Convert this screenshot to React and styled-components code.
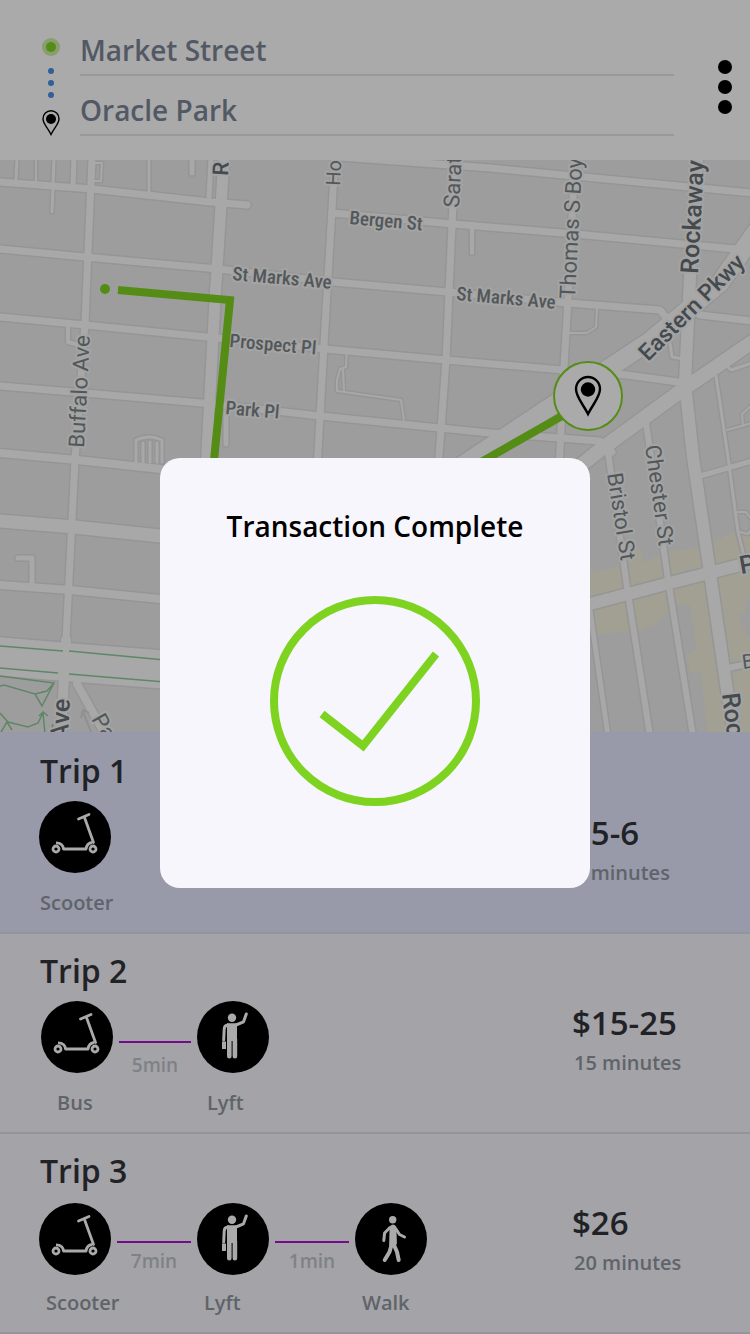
import React from 'react';
import styled, { createGlobalStyle } from 'styled-components';

const GlobalStyle = createGlobalStyle`
  * { box-sizing: border-box; }
  body {
    margin: 0;
    background: #fff;
    font-family: "Open Sans", "Noto Sans", sans-serif;
    font-weight: 600;
  }
`;

const Page = styled.div`
  display: flex;
  flex-direction: column;
  min-height: 100vh;
`;

/* ---------- search header ---------- */

const Header = styled.header`
  display: flex;
  align-items: flex-start;
  padding: 16px 18px 24px 42px;
  background: #fff;
`;

const Trail = styled.svg`
  flex: none;
  width: 18px;
  height: 98px;
  margin: 22px 20px 0 0;
`;

const Fields = styled.form`
  flex: 1;
  min-width: 0;
`;

const Field = styled.label`
  display: block;
  height: 60px;
  padding-top: 15px;
  border-bottom: 2px solid #e6e6e8;
`;

const FieldInput = styled.input`
  display: block;
  width: 100%;
  height: 38px;
  padding: 0;
  border: 0;
  outline: 0;
  background: transparent;
  color: #7b8698;
  font: inherit;
  font-size: 28px;
  line-height: 38px;
`;

const MenuButton = styled.button`
  display: flex;
  flex-direction: column;
  gap: 6px;
  margin: 44px 0 0 44px;
  padding: 0;
  border: 0;
  background: none;
`;

const MenuDot = styled.span`
  width: 14px;
  height: 14px;
  border-radius: 50%;
  background: #000;
`;

/* ---------- map ---------- */

const Map = styled.svg`
  display: block;
  flex: 1 1 0;
  width: 100%;
  min-height: 320px;
  background: #ececec;
`;

const MapText = styled.text`
  font-family: Roboto, "Open Sans", sans-serif;
  font-size: ${(p) => p.$size || 22}px;
  font-weight: ${(p) => (p.$major ? 500 : 400)};
  fill: ${(p) => (p.$major ? '#666f75' : '#7c8588')};
  stroke: #f6f6f6;
  stroke-width: 4px;
  stroke-linejoin: round;
  paint-order: stroke;
`;

const CondensedText = styled(MapText)`
  font-family: "Roboto Condensed", "Liberation Sans Narrow", Roboto, sans-serif;
  font-weight: 500;
`;

const roads = [
  ['M17 158L16 180', 3], ['M36 158V181', 2], ['M54 158L52 212', 3], ['M74 158L73 186', 5],
  ['M94 163h8l-1 18h-8z', 2], ['M149 158V192', 3], ['M192 158V173', 5], ['M211 158L209 197', 5],
  ['M68 325V342L79 345', 4], ['M226 413V444', 5],
  ['M136 462V440Q149 434 162 440V462M143 462V443M150 462V442M157 462V443', 3],
  ['M472 228V253', 4],
  ['M347 350L346 367L340 369L337 380V391L401 400L404 420M343 370L344 391', 2],
  ['M597 308L596 327L587 333H568', 2], ['M670 343L672 357L684 359', 3],
  ['M716 376L728 457L738 532L745 560', 3], ['M727 366L731 370L752 363', 3],
  ['M727 430L752 423M743 426L742 414L752 405', 2], ['M700 476L752 461', 5],
  ['M738 512H746L752 520M740 532L748 534L752 528', 2],
  ['M18 558H32V586', 5],
  ['M0 182L92 189L210 202L247 205', 7], ['M340 157L490 168L752 193', 7],
  ['M332 213L453 224L575 234L735 249', 7],
  ['M0 249L85 257L218 269L333 282L448 292L568 303L660 310L668 320M700 315L752 321', 7],
  ['M0 317L85 325L217 338L325 349L446 360L563 370L627 375L685 383', 7],
  ['M0 386L85 393L213 404L320 416L440 428L490 433L600 441L612 452', 7],
  ['M0 453L77 460L170 470', 8], ['M0 585L70 590L170 600', 8],
  ['M77 684L106 736', 8],
  ['M590 610L608 736', 5], ['M608 452L627 587L650 736', 6], ['M646 422L667 573L693 736', 6],
  ['M728 668L752 663', 6],
  ['M92 158L85 323L75 460L66 640', 7], ['M66 640L61 736', 10],
  ['M335 158L325 327L317 470', 7], ['M455 158L446 360L438 470', 7],
  ['M575 158L568 300L564 367L559 470', 7],
  ['M224 158L215 300L206 470', 11],
  ['M697 158L690 277L685 383L693 457L710 573L727 690L734 736', 12],
  ['M0 521L74 527L170 537', 13],
  ['M586 605L670 583L752 562', 12],
  ['M760 226L720 283L650 341L594 378L490 447L440 480', 18],
  ['M755 340L685 388L600 450L570 474', 14],
  ['M-5 656L66 662L170 670', 38],
];

const shops =
  'M586 571L600 572L618 565L625 548L640 548L645 563L663 553L680 550L710 545L732 532L752 536V596L745 600L746 612L737 616L750 640L752 662V736H708L701 673L690 672L686 655L697 650L690 604L676 605L658 622L640 631L597 634L586 600Z';

function StreetMap() {
  return (
    <Map viewBox="0 160 750 572" preserveAspectRatio="xMidYMid slice" role="img" aria-label="Route map">
      <path d={shops} fill="#f4f0dc" />
      <g fill="none" stroke="#e0e0e0" strokeLinejoin="round" strokeLinecap="round">
        {roads.map(([d, w]) => <path key={d} d={d} strokeWidth={w + 3} />)}
      </g>
      <g fill="none" stroke="#fcfcfc" strokeLinejoin="round" strokeLinecap="round">
        {roads.map(([d, w]) => <path key={d} d={d} strokeWidth={w} />)}
      </g>
      <g fill="none" stroke="#8ecb98" strokeWidth="1.5">
        <path d="M0 646L63 651M69 651L165 660M0 668L58 673M69 674L165 682" />
        <path d="M0 676L54 683L47 691L35 694L4 685L0 686M35 694L42 706L54 683" />
        <path d="M0 713L8 722L28 727L38 723L43 713L45 734M39 716L43 712L48 716M1 732L7 722L12 730M51 732L53 724" />
      </g>
      <path d="M92 734L83 712M81 718L83 710L89 713" fill="none" stroke="#d8d8d8" strokeWidth="2" />

      <CondensedText $size={19} transform="translate(349 224) rotate(5)">Bergen St</CondensedText>
      <CondensedText $size={19} transform="translate(232 280) rotate(5)">St Marks Ave</CondensedText>
      <CondensedText $size={19} transform="translate(456 300) rotate(5)">St Marks Ave</CondensedText>
      <CondensedText $size={19} transform="translate(229 347) rotate(5)">Prospect Pl</CondensedText>
      <CondensedText $size={19} transform="translate(225 414) rotate(5)">Park Pl</CondensedText>
      <MapText transform="translate(84 448) rotate(-87)">Buffalo Ave</MapText>
      <MapText $size={20} transform="translate(340 186) rotate(-87)">Ho</MapText>
      <MapText transform="translate(459 208) rotate(-87)">Sarat</MapText>
      <MapText transform="translate(575 299) rotate(-87)">Thomas S Boy</MapText>
      <MapText transform="translate(607 474) rotate(81)">Bristol St</MapText>
      <MapText transform="translate(645 446) rotate(82)">Chester St</MapText>
      <MapText transform="translate(91 719) rotate(60)">Pa</MapText>
      <MapText $size={20} transform="translate(743 669) rotate(-8)">B</MapText>
      <MapText $major transform="translate(228 176) rotate(-87)">R</MapText>
      <MapText $major $size={25} transform="translate(698 274) rotate(-87)">Rockaway</MapText>
      <MapText $major $size={23} transform="translate(648 362) rotate(-45)">Eastern Pkwy</MapText>
      <MapText $major $size={25} transform="translate(70 699) rotate(-87)" textAnchor="end">Ave</MapText>
      <MapText $major $size={25} transform="translate(722 694) rotate(83)">Roc</MapText>
      <MapText $major $size={25} transform="translate(741 574) rotate(-10)">P</MapText>

      <path d="M118 290L230 300L212 480L400 508L562 416" fill="none" stroke="#7ed321" strokeWidth="8" />
      <circle cx="105" cy="289" r="5" fill="#7ed321" />
      <circle cx="588" cy="396" r="34" fill="#fff" stroke="#7ed321" strokeWidth="2" />
      <path
        d="M588 414C583 404 576 397 576 389A12 12 0 0 1 600 389C600 397 593 404 588 414Z"
        fill="none" stroke="#000" strokeWidth="2.4"
      />
      <circle cx="588" cy="389.500" r="7.200" />
    </Map>
  );
}

/* ---------- trips ---------- */

const TripList = styled.ul`
  margin: 0;
  padding: 0;
  list-style: none;
`;

const TripRow = styled.li`
  display: flex;
  justify-content: space-between;
  padding: ${(p) => (p.$selected ? 19 : 17)}px 0 17px 39px;
  border-bottom: 2px solid #dfdeec;
  background: ${(p) => (p.$selected ? '#e4e7ff' : '#f6f5fc')};
`;

const Title = styled.h2`
  margin: 0;
  padding-left: 1px;
  color: #32343a;
  font-size: 32px;
  font-weight: 600;
  line-height: 40px;
`;

const Route = styled.div`
  display: flex;
  align-items: ${(p) => (p.$low ? 'flex-end' : 'flex-start')};
  height: 74px;
  margin-top: 10px;
  padding-left: ${(p) => p.$inset}px;
`;

const StopIcon = styled.svg`
  flex: none;
  width: 72px;
  height: 72px;
  border-radius: 50%;
  background: #000;
`;

const Connector = styled.div`
  align-self: flex-start;
  width: ${(p) => p.$width}px;
  margin-top: 40px;
  padding: 0 6px;
`;

const Duration = styled.span`
  display: block;
  padding-top: ${(p) => (p.$tight ? 6 : 10)}px;
  border-top: 2px solid #b20fd6;
  color: #bec4ca;
  font-size: 19px;
  line-height: 24px;
  text-align: center;
`;

const Labels = styled.div`
  display: grid;
  grid-auto-flow: column;
  grid-auto-columns: ${(p) => p.$step}px;
  justify-content: start;
  margin-top: 16px;
  padding-left: ${(p) => p.$inset}px;
  color: #8f979f;
  font-size: 20px;
  line-height: 24px;
`;

const Cost = styled.div`
  flex: none;
  width: 178px;
  padding-top: ${(p) => (p.$selected ? 62 : 52)}px;
`;

const Price = styled.div`
  color: #32343a;
  font-size: 33px;
  line-height: 40px;
`;

const Minutes = styled.div`
  margin-top: 8px;
  padding-left: 2px;
  color: #8f979f;
  font-size: 20px;
  line-height: 24px;
`;

const drawings = {
  scooter: (
    <g fill="none" stroke="#fff" strokeWidth="2.800">
      <circle cx="17" cy="48" r="3" />
      <circle cx="54" cy="48" r="3" />
      <path d="M17 41.800Q24 42 24.500 48H47Q48 42 53 41.500" strokeLinejoin="round" />
      <path d="M54.500 41.500L45.500 16.500M39.500 18L50 13.500" strokeLinecap="round" />
    </g>
  ),
  hail: (
    <g fill="#fff" stroke="#fff">
      <circle cx="35" cy="16.700" r="4.200" stroke="none" />
      <path d="M30 22.300H40V40H30Z" stroke="none" />
      <path d="M32.300 38V55.200M37.900 38V55.200" fill="none" strokeWidth="4.600" strokeLinecap="round" />
      <path d="M31 23.900Q27.300 24 27.200 28L26.700 39" fill="none" strokeWidth="3" strokeLinecap="round" />
      <path d="M39 24L46.500 20.800L49.300 13" fill="none" strokeWidth="3" strokeLinecap="round" strokeLinejoin="round" />
      <path d="M25 40.500H29V48H25Z" stroke="none" />
      <path d="M29.500 27V46" stroke="#000" strokeWidth="0.800" />
    </g>
  ),
  walk: (
    <g fill="none" stroke="#fff" strokeLinecap="round" strokeLinejoin="round">
      <circle cx="37.700" cy="16.700" r="3.700" fill="#fff" stroke="none" />
      <path d="M35.500 24Q38 21 40.500 24L41 40.500L39 43.500L35 42Z" fill="#fff" strokeWidth="1.800" />
      <path d="M35 24.500L29.600 30L28.800 37.500M41 26L44.500 31.500L49.500 34" strokeWidth="3" />
      <path d="M36.500 42L34.500 49L29.700 57M39 42L42 49L43.700 57" strokeWidth="4" />
    </g>
  ),
};

const trips = [
  {
    name: 'Trip 1', selected: true, price: '$5-6', minutes: '5 minutes',
    stops: [['scooter', 'Scooter']], legs: [], inset: 0, labelInset: 1, labelStep: 158,
  },
  {
    name: 'Trip 2', price: '$15-25', minutes: '15 minutes',
    stops: [['scooter', 'Bus'], ['hail', 'Lyft']], legs: ['5min'],
    inset: 2, legWidth: 84, labelInset: 18, labelStep: 150,
  },
  {
    name: 'Trip 3', price: '$26', minutes: '20 minutes', low: true,
    stops: [['scooter', 'Scooter'], ['hail', 'Lyft'], ['walk', 'Walk']], legs: ['7min', '1min'],
    inset: 0, legWidth: 86, labelInset: 7, labelStep: 158,
  },
];

function Trip({ trip }) {
  return (
    <TripRow $selected={trip.selected}>
      <div>
        <Title>{trip.name}</Title>
        <Route $inset={trip.inset} $low={trip.low}>
          {trip.stops.map(([icon], i) => (
            <React.Fragment key={icon}>
              <StopIcon viewBox="0 0 72 72" aria-hidden="true">{drawings[icon]}</StopIcon>
              {trip.legs[i] && (
                <Connector $width={trip.legWidth}>
                  <Duration $tight={trip.low}>{trip.legs[i]}</Duration>
                </Connector>
              )}
            </React.Fragment>
          ))}
        </Route>
        <Labels $inset={trip.labelInset} $step={trip.labelStep}>
          {trip.stops.map(([, label]) => <span key={label}>{label}</span>)}
        </Labels>
      </div>
      <Cost $selected={trip.selected}>
        <Price>{trip.price}</Price>
        <Minutes>{trip.minutes}</Minutes>
      </Cost>
    </TripRow>
  );
}

/* ---------- confirmation ---------- */

const Overlay = styled.div`
  position: fixed;
  inset: 0;
  display: flex;
  align-items: center;
  justify-content: center;
  padding-top: 12px;
  background: rgba(0, 0, 0, 0.333);
`;

const Dialog = styled.section`
  display: flex;
  flex-direction: column;
  align-items: center;
  gap: 52px;
  width: 430px;
  max-width: 90%;
  padding: 50px 24px 82px;
  border-radius: 20px;
  background: #f7f6fd;
`;

const DialogTitle = styled.h1`
  margin: 0;
  color: #000;
  font-size: 28px;
  font-weight: 600;
  line-height: 36px;
  white-space: nowrap;
`;

const Check = styled.svg`
  display: block;
  width: 210px;
  height: 210px;
`;

export default function App() {
  return (
    <Page>
      <GlobalStyle />
      <Header>
        <Trail viewBox="0 0 18 98" aria-hidden="true">
          <circle cx="9" cy="9" r="9" fill="#7ed321" fillOpacity="0.400" />
          <circle cx="9" cy="9" r="5" fill="#7ed321" />
          <circle cx="9" cy="33" r="3" fill="#4a90e2" />
          <circle cx="9" cy="45" r="3" fill="#4a90e2" />
          <circle cx="9" cy="57" r="3" fill="#4a90e2" />
          <path
            d="M9 96.500C6 90 1 86 1 80.700A8 8 0 0 1 17 80.700C17 86 12 90 9 96.500Z"
            fill="none" stroke="#000" strokeWidth="1.400"
          />
          <circle cx="9" cy="81" r="5" />
        </Trail>
        <Fields>
          <Field><FieldInput aria-label="Pickup" defaultValue="Market Street" /></Field>
          <Field><FieldInput aria-label="Destination" defaultValue="Oracle Park" /></Field>
        </Fields>
        <MenuButton type="button" aria-label="Menu">
          <MenuDot /><MenuDot /><MenuDot />
        </MenuButton>
      </Header>
      <StreetMap />
      <TripList>
        {trips.map((trip) => <Trip key={trip.name} trip={trip} />)}
      </TripList>
      <Overlay>
        <Dialog role="dialog" aria-modal="true" aria-labelledby="dialog-title">
          <DialogTitle id="dialog-title">Transaction Complete</DialogTitle>
          <Check viewBox="0 0 210 210" fill="none" stroke="#7ed321" strokeWidth="8" aria-hidden="true">
            <circle cx="105" cy="105" r="101" />
            <path d="M52 118L93 150L166 58" />
          </Check>
        </Dialog>
      </Overlay>
    </Page>
  );
}
